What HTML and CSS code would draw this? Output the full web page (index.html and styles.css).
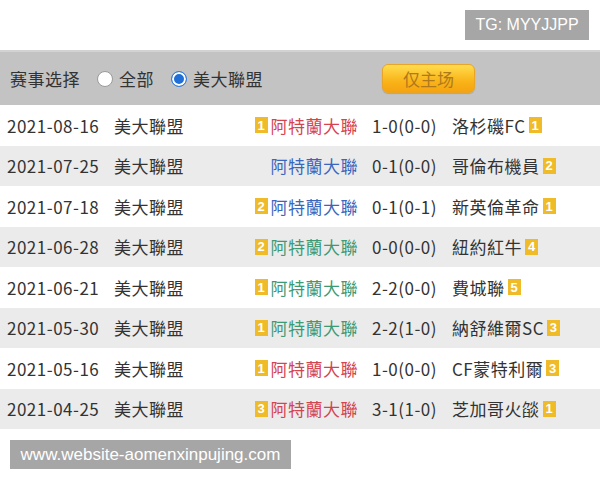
FILE: index.html
```html
<!DOCTYPE html>
<html lang="zh">
<head>
<meta charset="utf-8">
<link rel="stylesheet" href="styles.css">
</head>
<body>
<div class="top"><span class="tg">TG: MYYJJPP</span></div>
<div class="filter">
  <span class="label">赛事选择</span>
  <span class="radio"></span><span class="opt">全部</span>
  <span class="radio on"></span><span class="opt">美大聯盟</span>
  <span class="btn">仅主场</span>
</div>
<div class="table">
  <div class="row"><span class="date">2021-08-16</span><span class="lg">美大聯盟</span><span class="home"><i class="b">1</i><span class="red">阿特蘭大聯</span></span><span class="score">1-0(0-0)</span><span class="away">洛杉磯FC<i class="b">1</i></span></div>
  <div class="row alt"><span class="date">2021-07-25</span><span class="lg">美大聯盟</span><span class="home"><span class="blue">阿特蘭大聯</span></span><span class="score">0-1(0-0)</span><span class="away">哥倫布機員<i class="b">2</i></span></div>
  <div class="row"><span class="date">2021-07-18</span><span class="lg">美大聯盟</span><span class="home"><i class="b">2</i><span class="blue">阿特蘭大聯</span></span><span class="score">0-1(0-1)</span><span class="away">新英倫革命<i class="b">1</i></span></div>
  <div class="row alt"><span class="date">2021-06-28</span><span class="lg">美大聯盟</span><span class="home"><i class="b">2</i><span class="green">阿特蘭大聯</span></span><span class="score">0-0(0-0)</span><span class="away">紐約紅牛<i class="b">4</i></span></div>
  <div class="row"><span class="date">2021-06-21</span><span class="lg">美大聯盟</span><span class="home"><i class="b">1</i><span class="green">阿特蘭大聯</span></span><span class="score">2-2(0-0)</span><span class="away">費城聯<i class="b">5</i></span></div>
  <div class="row alt"><span class="date">2021-05-30</span><span class="lg">美大聯盟</span><span class="home"><i class="b">1</i><span class="green">阿特蘭大聯</span></span><span class="score">2-2(1-0)</span><span class="away">納舒維爾SC<i class="b">3</i></span></div>
  <div class="row"><span class="date">2021-05-16</span><span class="lg">美大聯盟</span><span class="home"><i class="b">1</i><span class="red">阿特蘭大聯</span></span><span class="score">1-0(0-0)</span><span class="away">CF蒙特利爾<i class="b">3</i></span></div>
  <div class="row alt"><span class="date">2021-04-25</span><span class="lg">美大聯盟</span><span class="home"><i class="b">3</i><span class="red">阿特蘭大聯</span></span><span class="score">3-1(1-0)</span><span class="away">芝加哥火燄<i class="b">1</i></span></div>
</div>
<div class="foot"><span class="site">www.website-aomenxinpujing.com</span></div>
</body>
</html>
```
FILE: styles.css
```css
html, body { margin: 0; padding: 0; background: #fff; }
body { width: 600px; font-family: "Noto Sans CJK SC", "Noto Sans", sans-serif; color: #333; }
.top { height: 50px; display: flex; justify-content: flex-end; align-items: flex-start; }
.tg {
  margin: 10px 11px 0 0; width: 124px; height: 30px; background: #a6a6a6; color: #fff;
  font-family: "Liberation Sans", Arial, sans-serif; font-size: 16px;
  display: flex; align-items: center; justify-content: center;
}
.filter {
  height: 53px; background: #c3c3c3; border-top: 2px solid #d2d2d2;
  display: flex; align-items: center; font-size: 17px; letter-spacing: 0.5px;
  padding-left: 10px; color: #333;
}
.label { margin-right: 17px; }
.radio {
  width: 14px; height: 14px; border-radius: 50%; background: #fff; border: 1px solid #9a9a9a;
  margin-right: 6px; box-sizing: content-box; flex: none;
}
.radio.on { background: #1f6fd6; box-shadow: inset 0 0 0 2px #fff; border-color: #3a7fd8; }
.opt { margin-right: 17px; }
.btn {
  margin-left: 102px; width: 93px; height: 29px; border-radius: 6px; box-sizing: border-box;
  background: linear-gradient(#ffdc4e, #f9b418 60%, #f5a310); border: 1px solid #e8a526;
  color: #b07a1c; font-size: 17px; letter-spacing: 0; display: flex; align-items: center; justify-content: center;
  box-shadow: 0 1px 1px rgba(0,0,0,0.15);
}
.table { display: grid; grid-auto-rows: 40.5px; }
.row {
  display: grid; grid-template-columns: 107px 136px 122px 80px auto; align-items: center;
  padding-left: 7px; font-size: 17px; letter-spacing: 0.5px; background: #fff; color: #333;
}
.row.alt { background: #ebebeb; }
.home { display: flex; justify-content: flex-end; align-items: center; gap: 3px; padding-right: 14px; }
.away { display: flex; align-items: center; gap: 3px; }
.b {
  font-style: normal; width: 13px; height: 16px; background: #f0bb28; color: #fff;
  font-size: 13px; font-weight: bold; font-family: "Liberation Sans", Arial, sans-serif;
  letter-spacing: 0; display: inline-flex; align-items: center; justify-content: center; flex: none;
}
.red { color: #d5434f; }
.blue { color: #3a66bd; }
.green { color: #3d9a73; }
.foot { padding: 11px 0 0 10px; }
.site {
  display: inline-flex; align-items: center; justify-content: center; width: 281px; height: 29px;
  background: #a6a6a6; color: #fff; font-family: "Liberation Sans", Arial, sans-serif; font-size: 17px;
}
```
